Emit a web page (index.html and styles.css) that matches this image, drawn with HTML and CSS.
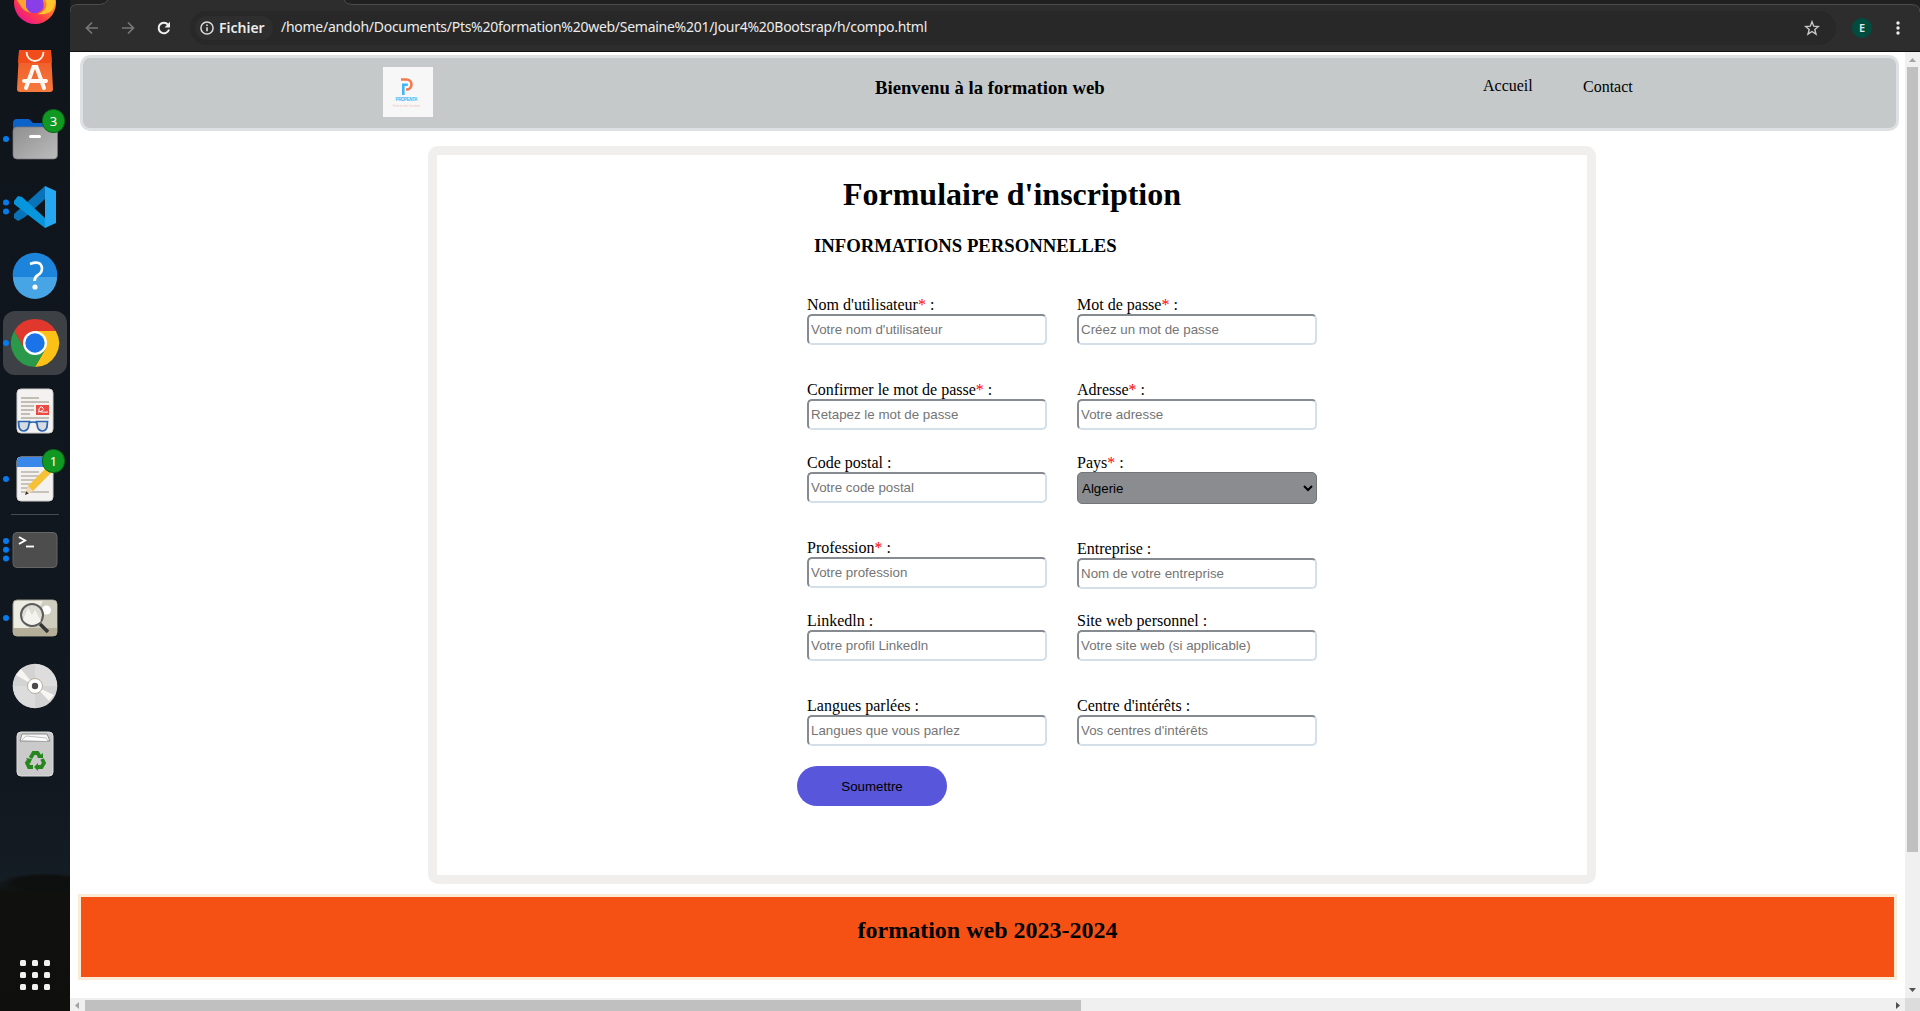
FILE: index.html
```html
<!DOCTYPE html>
<html lang="fr">
<head>
<meta charset="utf-8">
<title>Formation web</title>
<link rel="stylesheet" href="styles.css">
</head>
<body>
<div class="desktop">
  <nav class="dock">
    <div class="dock-list">
      <svg class="app" viewBox="0 0 70 68"><defs><linearGradient id="ff" x1="1" y1="0" x2="0.2" y2="1"><stop offset="0" stop-color="#ffe040"/><stop offset=".4" stop-color="#ff8a28"/><stop offset=".7" stop-color="#ff3c48"/><stop offset="1" stop-color="#e8129a"/></linearGradient></defs><circle cx="35" cy="34" r="21" fill="url(#ff)"/><path d="M16 30q8-4 14 5l12-7q6 10-4 14t-16-3z" fill="#ffa22e"/><path d="M26 31h17q3 9-4 12-9 4-13-5z" fill="#8a3ee8"/><path d="M43 27q9 12-5 18 18 2 17-16z" fill="#ffc52f"/></svg>
      <svg class="app" viewBox="0 0 70 68"><defs><linearGradient id="sw" x1="0" y1="0" x2="0" y2="1"><stop offset="0" stop-color="#ee5522"/><stop offset="1" stop-color="#f67a3e"/></linearGradient></defs><path d="M21 13h28q2 0 2 2l2 37q0 3-3 3H20q-3 0-3-3l2-37q0-2 2-2z" fill="url(#sw)"/><path d="M19 13h32l1 13H18z" fill="#f04d1a"/><path d="M26.500 15a8.500 9 0 0 0 17 0" fill="none" stroke="#fff1e8" stroke-width="1.800"/><path d="M26 51l7.500-21h3L44 51M24 44h22" fill="none" stroke="#fff8f3" stroke-width="4" stroke-linecap="round"/></svg>
      <svg class="app" viewBox="0 0 70 68"><defs><linearGradient id="fd" x1="0" y1="0" x2="1" y2="1"><stop offset="0" stop-color="#8f8f8f"/><stop offset="1" stop-color="#bcbcbc"/></linearGradient></defs><path d="M13 18q0-4 4-4h12l4 4h20q4 0 4 4v9H13z" fill="#0b62c8"/><rect x="13" y="22" width="44.500" height="32" rx="4" fill="url(#fd)" stroke="#787878" stroke-width=".7"/><rect x="29" y="30" width="12" height="3" rx="1.500" fill="#fff"/><circle cx="6" cy="34" r="3" fill="#087bec"/><rect x="42.500" y="4.500" width="22" height="23" rx="10.500" fill="#119822" stroke="#0b6318"/><text x="53.500" y="20.500" class="badge">3</text></svg>
      <svg class="app" viewBox="0 0 70 68"><path d="M45 13L14 41v4l4 3 7-4 20-18z" fill="#0873b8"/><path d="M14 28l4-5 4 1 23 21v10L14 31z" fill="#0796dc"/><path d="M45 13l11 5v32l-11 5z" fill="#27a7f1"/><circle cx="6" cy="29.500" r="3" fill="#087bec"/><circle cx="6" cy="38.500" r="3" fill="#087bec"/></svg>
      <svg class="app" viewBox="0 0 70 68"><circle cx="35" cy="34" r="22.300" fill="#1c84da"/><path d="M13 36h44a22 22 0 0 1-44 0z" fill="#48a5e5"/><path d="M30 23q11-4 12 4 0 5-4 7-3.500 2-3.500 6" fill="none" stroke="#fff" stroke-width="2.600"/><circle cx="35" cy="46" r="2.600" fill="#fff"/></svg>
      <svg class="app" viewBox="0 0 70 68"><rect x="3" y="2" width="64" height="64" rx="12" fill="#3d4146"/><path d="M14.200 22A24 24 0 0 1 55.800 22H35L24.600 40z" fill="#e0382d"/><path d="M55.800 22A24 24 0 0 1 35 58l10.400-18L35 22z" fill="#fbc116"/><path d="M35 58A24 24 0 0 1 14.200 22l10.400 18H45.400z" fill="#2a994a"/><circle cx="35" cy="34" r="12" fill="#fff"/><circle cx="35" cy="34" r="9.700" fill="#1a73e8"/><circle cx="6" cy="34" r="3" fill="#087bec"/></svg>
      <svg class="app" viewBox="0 0 70 68"><rect x="17" y="12" width="36" height="44" rx="4" fill="#f3f2f1" stroke="#cfcecb"/><path d="M21 21h18M21 25h28M21 29h13M21 33h13M21 37h9M21 41h28" stroke="#c2bdb2" stroke-width="2"/><rect x="36" y="28" width="13" height="10" fill="#e94b45"/><path d="M38 35q7-1 5-4t-4 1 9 3" fill="none" stroke="#fff"/><path d="M18.500 44.500h11l-1.200 6q-1.300 3.500-4.300 3.500-4 0-5-4zM47.500 44.500h-11l1.200 6q1.300 3.500 4.300 3.500 4 0 5-4zM29 46q4-2 8 0" fill="#c9d3dc" fill-opacity=".7" stroke="#2a63b0" stroke-width="1.700"/></svg>
      <svg class="app" viewBox="0 0 70 68"><rect x="17" y="12" width="36" height="44" rx="4" fill="#f3f2f1" stroke="#cfcecb"/><path d="M17 22v-6q0-4 4-4h28q4 0 4 4v6z" fill="#3987e8"/><path d="M21 27h18M21 31h18M21 35h16M21 39h14M21 43h9M21 47h28" stroke="#c7c3bb" stroke-width="2"/><path d="M25 50l3-9 20-20 5 5-20 20z" fill="#f5c136"/><path d="M25 50l3-9 5 5z" fill="#f1dabd"/><path d="M25 50l1.300-3.800 2.400 2.300z" fill="#333"/><circle cx="6" cy="34" r="3" fill="#087bec"/><rect x="42.500" y="4.500" width="22" height="23" rx="10.500" fill="#119822" stroke="#0b6318"/><text x="53.500" y="20.500" class="badge">1</text></svg>
      <div class="dock-rule"></div>
      <svg class="app" viewBox="0 0 70 68"><rect x="13" y="16.500" width="44" height="35" rx="4" fill="#4d4d4d" stroke="#656565"/><path d="M19 21l6 3.500-6 3.500" fill="none" stroke="#fff" stroke-width="2"/><path d="M26 30.500h8" stroke="#fff" stroke-width="1.800"/><circle cx="6" cy="25" r="3" fill="#087bec"/><circle cx="6" cy="33.800" r="3" fill="#087bec"/><circle cx="6" cy="42.500" r="3" fill="#087bec"/></svg>
      <svg class="app" viewBox="0 0 70 68"><rect x="13" y="16" width="44" height="36" rx="4" fill="#eeede4" stroke="#9d9b8b"/><path d="M43 17h10q4 0 4 4v24H28z" fill="#cfcdbd"/><path d="M13 44h44v4q0 4-4 4H17q-4 0-4-4z" fill="#b5ae98"/><circle cx="46.500" cy="26" r="4.500" fill="#fff"/><circle cx="32" cy="31" r="11" fill="#deddd5" stroke="#5c5c5c" stroke-width="2"/><path d="M23 36l5-12 4 7 3-5 6 11q-9 8-18-1z" fill="#f4f3ee"/><path d="M40 40l8 8" stroke="#353535" stroke-width="3.500"/><circle cx="6" cy="34" r="3" fill="#087bec"/></svg>
      <svg class="app" viewBox="0 0 70 68"><circle cx="35" cy="34" r="22.300" fill="#d3d3d3"/><path d="M35 34V12a22 22 0 0 1 22 22z" fill="#dddddd"/><path d="M35 34v22a22 22 0 0 1-22-22z" fill="#dcdcdc"/><path d="M35 34L16 23l5-6zM35 34l19 9-5 6z" fill="#f8f6f3"/><circle cx="35" cy="34" r="7.500" fill="#fff" stroke="#b5ae9c"/><circle cx="35" cy="34" r="3.200" fill="#4b4b4b"/></svg>
      <svg class="app" viewBox="0 0 70 68"><rect x="17" y="12" width="36" height="44" rx="4" fill="#cacaca" stroke="#dedede"/><path d="M22 14h25l3 7H20z" fill="#f7f7f7" stroke="#777" stroke-width=".8"/><path d="M22 20l4-4 20 2 2 3" fill="#fff" stroke="#999" stroke-width=".6"/><g fill="none" stroke="#26861b" stroke-width="3.800"><path d="M30.500 38l3-5h4l2.500 4"/><path d="M42 39l2 4-2.500 4H37"/><path d="M33 47h-4l-2-4 2-3"/></g><path d="M37 38h6v-5zM38 43v8l-4-4zM26 38l6 1-2 5z" fill="#26861b"/></svg>
    </div>
    <svg class="show-apps" viewBox="0 0 30 30" fill="#f2f2f2"><rect width="6" height="6" rx="1.500"/><rect x="12" width="6" height="6" rx="1.500"/><rect x="24" width="6" height="6" rx="1.500"/><rect y="12" width="6" height="6" rx="1.500"/><rect x="12" y="12" width="6" height="6" rx="1.500"/><rect x="24" y="12" width="6" height="6" rx="1.500"/><rect y="24" width="6" height="6" rx="1.500"/><rect x="12" y="24" width="6" height="6" rx="1.500"/><rect x="24" y="24" width="6" height="6" rx="1.500"/></svg>
  </nav>

  <div class="browser">
    <svg class="tabs" viewBox="0 0 1850 12"><path d="M0 12V0h1850v12z" fill="#202020"/><path d="M0 12Q0 4.500 8 4.500h20q8 0 10-5h236q1 5 10 5h1557q9 0 9 7.500z" fill="#2d2d2d"/><path d="M0 12Q0 4.500 8 4.500h20q8 0 10-5M274-.5q1 5 10 5h1557q9 0 9 7.500" fill="none" stroke="#4c4c4c"/></svg>
    <div class="toolbar">
      <svg class="nav-icon" viewBox="0 0 14 14"><path d="M13 7H2M7 1.500L1.500 7 7 12.500" fill="none" stroke="#777" stroke-width="1.700"/></svg>
      <svg class="nav-icon" viewBox="0 0 14 14"><path d="M1 7h11M7 1.500L12.500 7 7 12.500" fill="none" stroke="#777" stroke-width="1.700"/></svg>
      <svg class="nav-icon" viewBox="0 0 14 14"><path d="M11 3.600A5.300 5.300 0 1 0 12 8.500" fill="none" stroke="#f0f0f0" stroke-width="2"/><path d="M13 .8v5.700H7.500z" fill="#f0f0f0"/></svg>
      <div class="address">
        <div class="scheme">
          <svg class="info" viewBox="0 0 14 14"><circle cx="7" cy="7" r="6.100" fill="none" stroke="#ddd" stroke-width="1.500"/><path d="M7 6.300v4M7 3.500v1.600" stroke="#ddd" stroke-width="1.600"/></svg>
          <span class="scheme-name">Fichier</span>
        </div>
        <span class="url">/home/andoh/Documents/Pts%20formation%20web/Semaine%201/Jour4%20Bootsrap/h/compo.html</span>
        <svg class="star" viewBox="0 0 16 16"><path d="M8 1.800l1.700 4.400 4.700.3-3.600 3 1.200 4.600L8 11.500l-4 2.600 1.200-4.600-3.600-3 4.700-.3z" fill="none" stroke="#c9c9c9" stroke-width="1.400"/></svg>
      </div>
      <span class="profile">E</span>
      <svg class="more" viewBox="0 0 4 14" fill="#eee"><circle cx="2" cy="2" r="1.700"/><circle cx="2" cy="7" r="1.700"/><circle cx="2" cy="12" r="1.700"/></svg>
    </div>

    <div class="viewport">
      <main class="page">
        <header class="header">
          <svg class="logo" viewBox="0 0 50 50"><rect width="50" height="50" fill="#f7f7f7"/><path d="M18 12.500h5.500a5 5 0 0 1 0 10h-.5" fill="none" stroke="#f47a50" stroke-width="2.600"/><path d="M20.300 28v-10.300h4.500" fill="none" stroke="#42b5f5" stroke-width="2.600"/><text x="23.500" y="34" class="logo-name" textLength="22">PROPENTA</text><text x="23.500" y="39.500" class="logo-tag" textLength="27">Find me the freedom</text></svg>
          <h3 class="brand">Bienvenu à la formation web</h3>
          <a class="link home">Accueil</a>
          <a class="link contact">Contact</a>
        </header>

        <form class="signup">
          <h1 class="title">Formulaire d'inscription</h1>
          <h3 class="subtitle">INFORMATIONS PERSONNELLES</h3>
          <div class="fields">
            <div class="column">
              <label class="field wide">Nom d'utilisateur<span class="req">*</span> :<input class="control" placeholder="Votre nom d'utilisateur"></label>
              <label class="field">Confirmer le mot de passe<span class="req">*</span> :<input class="control" placeholder="Retapez le mot de passe"></label>
              <label class="field wide">Code postal :<input class="control" placeholder="Votre code postal"></label>
              <label class="field">Profession<span class="req">*</span> :<input class="control" placeholder="Votre profession"></label>
              <label class="field wide">Linkedln :<input class="control" placeholder="Votre profil Linkedln"></label>
              <label class="field">Langues parlées :<input class="control" placeholder="Langues que vous parlez"></label>
            </div>
            <div class="column">
              <label class="field wide">Mot de passe<span class="req">*</span> :<input class="control" placeholder="Créez un mot de passe"></label>
              <label class="field">Adresse<span class="req">*</span> :<input class="control" placeholder="Votre adresse"></label>
              <label class="field wide">Pays<span class="req">*</span> :<select class="control country"><option>Algerie</option></select></label>
              <label class="field tight">Entreprise :<input class="control" placeholder="Nom de votre entreprise"></label>
              <label class="field wide">Site web personnel :<input class="control" placeholder="Votre site web (si applicable)"></label>
              <label class="field">Centre d'intérêts :<input class="control" placeholder="Vos centres d'intérêts"></label>
            </div>
          </div>
          <button class="submit" type="button">Soumettre</button>
        </form>

        <footer class="footer"><h2 class="footer-title">formation web 2023-2024</h2></footer>
      </main>
      <div class="vbar">
        <svg class="arrow" viewBox="0 0 15 15"><path d="M4 10l3.500-4L11 10z" fill="#a3a3a3"/></svg>
        <div class="vthumb"></div>
        <svg class="arrow" viewBox="0 0 15 15"><path d="M4 5l3.500 4L11 5z" fill="#505050"/></svg>
      </div>
      <div class="hbar">
        <svg class="arrow" viewBox="0 0 15 15"><path d="M9 4L5 7.500 9 11z" fill="#a3a3a3"/></svg>
        <div class="hthumb"></div>
        <svg class="arrow" viewBox="0 0 15 15"><path d="M6 4l4 3.500L6 11z" fill="#505050"/></svg>
      </div>
      <div class="corner"></div>
    </div>
  </div>
</div>
</body>
</html>
```
FILE: styles.css
```css
* { box-sizing: border-box; }
body { margin: 0; font: 16px/18px "Liberation Serif", serif; color: #000; overflow: hidden; }
h1, h2, h3 { margin: 0; }
svg { display: block; flex: none; }
.desktop { display: flex; width: 1920px; height: 1011px; overflow: hidden; }

/* Dock */
.dock { width: 70px; flex: none; display: flex; flex-direction: column; justify-content: space-between; align-items: center; padding-bottom: 21px; overflow: hidden; background: radial-gradient(ellipse 45px 10px at 45px 883px, #0e100f 70%, transparent), linear-gradient(#10151b 0, #10161e 400px, #12181f 780px, #141c24 880px, #10110f 892px, #0f0f0e 100%); }
.dock-list { margin-top: -31px; }
.app { width: 70px; height: 68px; }
.badge { fill: #fff; font: 13px "Noto Sans", sans-serif; text-anchor: middle; }
.dock-rule { width: 48px; height: 1px; margin: 1px auto; background: #484b4e; }
.show-apps { width: 30px; height: 30px; }

/* Browser chrome */
.browser { width: 1850px; display: flex; flex-direction: column; background: #2d2d2d; }
.tabs { width: 1850px; height: 12px; margin-bottom: -1px; }
.toolbar { height: 41px; display: flex; align-items: flex-start; padding-left: 15px; border-bottom: 1px solid #111; }
.nav-icon { width: 14px; height: 14px; margin: 10px 22px 0 0; }
.address { width: 1646px; height: 34px; margin-left: -3px; border-radius: 17px; background: #282828; display: flex; align-items: center; padding: 0 16px 0 5px; color: #ececec; font: 14px/20px "Noto Sans", sans-serif; }
.scheme { width: 78px; height: 24px; flex: none; display: flex; align-items: center; gap: 5px; padding-left: 5px; border-radius: 12px; background: #2e2e2e; }
.info { width: 14px; height: 14px; }
.scheme-name { font-weight: 600; padding-bottom: 1px; }
.url { margin-left: 8px; padding-bottom: 2px; letter-spacing: -0.27px; white-space: nowrap; }
.star { width: 16px; height: 16px; margin-left: auto; }
.profile { width: 20px; height: 20px; margin: 7px 0 0 16px; border-radius: 50%; background: #004d40; color: #dce8e6; font: 600 11px/20px "Noto Sans", sans-serif; text-align: center; }
.more { width: 4px; height: 14px; margin: 10px 0 0 24px; }

/* Viewport with its scrollbars */
.viewport { flex: 1; display: grid; grid-template: 946px 13px / 1835px 15px; background: #fff; }
.page { padding-top: 3px; }
.vbar { display: flex; flex-direction: column; background: #f0f0f0; }
.vthumb { width: 11px; height: 785px; margin: 0 0 auto 2px; background: #c0c0c0; }
.hbar { display: flex; background: #f0f0f0; overflow: hidden; }
.hthumb { width: 996px; height: 11px; margin: 2px auto 0 0; background: #c0c0c0; }
.arrow { width: 15px; height: 15px; }
.corner { background: #dcdcdc; }

/* Page */
.header { width: 1819px; height: 76px; margin-left: 10px; padding: 9px 0 0 300px; display: flex; align-items: flex-start; border: 3px solid #dee1e3; border-radius: 10px; background: #c5c9ca; }
.logo { width: 50px; height: 50px; }
.logo-name { fill: #42b5f5; font: bold 4.5px "Liberation Sans", sans-serif; text-anchor: middle; }
.logo-tag { fill: #ecc9bd; font: 3px "Liberation Sans", sans-serif; text-anchor: middle; }
.brand { width: 608px; margin: 10px 0 0 442px; font-size: 18.72px; line-height: 21px; }
.link { width: 100px; margin-top: 10px; }
.contact { margin-top: 11px; }

.signup { width: 1168px; height: 738px; margin: 15px 0 0 358px; border: 9px solid #f0efee; border-radius: 10px; padding-top: 21px; }
.title { font-size: 32px; line-height: 37px; text-align: center; }
.subtitle { margin: 22px 0 0 377px; font-size: 18.72px; line-height: 21px; }
.fields { display: flex; gap: 30px; margin: 40px 0 0 370px; }
.column { width: 240px; }
.field { display: block; height: 49px; margin-bottom: 24px; }
.field.wide { margin-bottom: 36px; }
.field.tight { margin-bottom: 23px; }
.req { color: #f00; }
.control { display: block; width: 240px; height: 31px; padding: 1px 2px; border: 2px solid; border-color: #858b90 #d3dfe9 #d3dfe9 #858b90; border-radius: 5px; background: #fff; font: 13.333px "Liberation Sans", sans-serif; }
.control::placeholder { color: #757575; }
.country { height: 32px; padding: 0; border: 1px solid #74777a; background: #8a8c90; color: #000; }
.field:has(.country) { height: 50px; }
.submit { display: block; width: 150px; height: 40px; margin: -4px 0 0 360px; border: 0; border-radius: 20px; background: #5856da; color: #000; font: 13.333px "Liberation Sans", sans-serif; }

.footer { width: 1819px; height: 86px; margin: 10px 0 0 8px; padding-top: 20px; border: 3px solid #faebd7; background: #f65114; text-align: center; }
.footer-title { font-size: 24px; line-height: 27px; }
```
